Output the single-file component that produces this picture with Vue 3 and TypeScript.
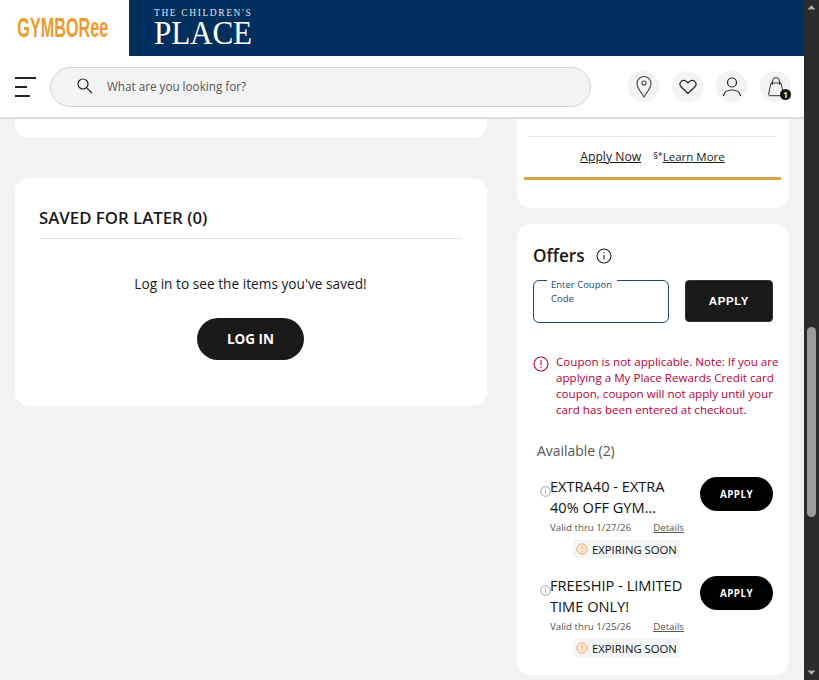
<script setup lang="ts">
interface Coupon { title: string; valid: string }
const coupons: Coupon[] = [
  { title: 'EXTRA40 - EXTRA 40% OFF GYM...', valid: 'Valid thru 1/27/26' },
  { title: 'FREESHIP - LIMITED TIME ONLY!', valid: 'Valid thru 1/25/26' },
]
</script>

<template>
  <div class="window">
    <div class="page">
      <header class="brands">
        <div class="gym"><span class="gym-text">GYMBORee</span></div>
        <div class="tcp">
          <span class="tcp-small">THE CHILDREN'S</span>
          <span class="tcp-big">PLACE</span>
        </div>
      </header>
      <nav class="nav">
        <div class="burger"><i class="b1"></i><i class="b2"></i><i class="b3"></i></div>
        <div class="search">
          <svg width="18" height="18" viewBox="0 0 18 18" fill="none" stroke="#222" stroke-width="1.2"><circle cx="7" cy="7" r="5"/><path d="M10.8 10.8 16 16"/></svg>
          <span>What are you looking for?</span>
        </div>
        <div class="icons">
          <div class="ic">
            <svg width="18" height="24" viewBox="0 0 18 24" fill="none" stroke="#444" stroke-width="1.1"><path d="M9 22C6 17 2 13 2 8.500a7 7 0 0 1 14 0C16 13 12 17 9 22Z"/><circle cx="9" cy="8" r="2"/></svg>
          </div>
          <div class="ic">
            <svg width="18" height="16" viewBox="0 0 18 16" fill="none" stroke="#222" stroke-width="1.2"><path d="M9 14.500 2.300 8A4 4 0 0 1 2 2.600a4.300 4.300 0 0 1 5.800.100L9 4l1.200-1.300a4.300 4.300 0 0 1 5.800-.1A4 4 0 0 1 15.700 8Z"/></svg>
          </div>
          <div class="ic">
            <svg width="20" height="22" viewBox="0 0 20 22" fill="none" stroke="#222" stroke-width="1.2"><circle cx="10" cy="6.500" r="4.500"/><path d="M1.500 20c.5-4 4-6 8.500-6s8 2 8.500 6"/></svg>
          </div>
          <div class="ic">
            <svg width="18" height="22" viewBox="0 0 18 22" fill="none" stroke="#333" stroke-width="1"><path d="M4 7 1.500 18.500c0 .800.500 1.200 1.200 1.200h12.600c.7 0 1.200-.4 1.200-1.200L14 7Z"/><path d="M5.500 9V5a3.500 3.500 0 0 1 7 0v4"/></svg>
            <span class="count">1</span>
          </div>
        </div>
      </nav>

      <main class="content">
        <section class="left">
          <div class="card stub-left"></div>
          <div class="card saved">
            <h2>SAVED FOR LATER (0)</h2>
            <p>Log in to see the items you've saved!</p>
            <button class="login">LOG IN</button>
          </div>
        </section>
        <aside class="right">
          <div class="card stub-right">
            <div class="links">
              <a>Apply Now</a>
              <span class="learn"><sup>§*</sup><a>Learn More</a></span>
            </div>
            <div class="gold"></div>
          </div>
          <div class="card offers">
            <div class="offers-head">
              <h3>Offers</h3>
              <svg width="16" height="16" viewBox="0 0 16 16" fill="none" stroke="#222" stroke-width="1.100"><circle cx="8" cy="8" r="7"/><path d="M8 7v4.500M8 4.300v1.200"/></svg>
            </div>
            <div class="coupon-row">
              <div class="field"><span>Enter Coupon<br>Code</span></div>
              <button class="apply-main">APPLY</button>
            </div>
            <div class="error">
              <svg width="16" height="16" viewBox="0 0 16 16" fill="none" stroke="#b5003c" stroke-width="1.100"><circle cx="8" cy="8" r="7"/><path d="M8 4v5M8 10.800v1.200"/></svg>
              <p>Coupon is not applicable. Note: If you are applying a My Place Rewards Credit card coupon, coupon will not apply until your card has been entered at checkout.</p>
            </div>
            <div class="avail">Available (2)</div>
            <div v-for="c in coupons" :key="c.title" class="coupon">
              <svg class="mini" width="11" height="11" viewBox="0 0 11 11" fill="none" stroke="#888" stroke-width=".8"><circle cx="5.500" cy="5.500" r="4.800"/><path d="M5.500 5v3M5.500 2.800v1"/></svg>
              <div class="coupon-body">
                <div class="coupon-top">
                  <div class="coupon-title">{{ c.title }}</div>
                  <button class="apply-pill">APPLY</button>
                </div>
                <div class="coupon-meta"><span>{{ c.valid }}</span><a>Details</a></div>
                <div class="expiring">
                  <svg width="12" height="12" viewBox="0 0 12 12" fill="#fbe6cf" stroke="#eca767" stroke-width=".9"><circle cx="6" cy="6" r="5.200"/><path d="M6 3v3.500M6 8v1"/></svg>
                  <span>EXPIRING SOON</span>
                </div>
              </div>
            </div>
          </div>
        </aside>
      </main>
    </div>
    <div class="scrollbar">
      <svg class="arrow" width="15" height="15" viewBox="0 0 15 15"><path d="M3.500 9.500 7.500 5l4 4.500Z" fill="#a8a8a8"/></svg>
      <div class="track"><div class="thumb"></div></div>
      <svg class="arrow" width="15" height="15" viewBox="0 0 15 15"><path d="M3.500 5.500 7.500 10l4-4.500Z" fill="#a8a8a8"/></svg>
    </div>
  </div>
</template>

<style>
html, body { margin: 0; height: 100%; overflow: hidden; }
</style>

<style scoped>
.window { display: flex; width: 819px; height: 680px; overflow: hidden; font-family: "Open Sans", "Noto Sans", sans-serif; color: #1a1a1a; }
.page { width: 804px; height: 680px; display: flex; flex-direction: column; background: #f2f2f2; overflow: hidden; }

.brands { height: 56px; flex: none; display: flex; background: #002e5d; }
.gym { width: 129px; background: #fff; display: flex; align-items: center; justify-content: center; }
.gym-text { font-family: "Liberation Sans", sans-serif; font-weight: 700; font-size: 27px; color: #ee9b2d; display: inline-block; transform: scaleX(.6); white-space: nowrap; margin-left: -3px; }
.tcp { margin-left: 25px; display: flex; flex-direction: column; justify-content: center; color: #fff; font-family: "Liberation Serif", serif; padding-bottom: 3px; }
.tcp-small { font-size: 9.500px; letter-spacing: 1.6px; line-height: 10px; margin-top: 2px; color: #dfe7ef; white-space: nowrap; }
.tcp-big { font-size: 34.500px; line-height: 29px; letter-spacing: -.2px; transform: scaleX(.905); transform-origin: left center; }

.nav { height: 61px; flex: none; background: #fff; border-bottom: 2px solid #ddd; display: flex; align-items: center; padding: 0 13px 0 15px; }
.burger { width: 21px; display: flex; flex-direction: column; gap: 7px; margin-right: 14px; }
.burger i { display: block; height: 2px; background: #222; }
.b1 { width: 21px; } .b2 { width: 12px; } .b3 { width: 15px; }
.search { width: 541px; height: 40px; box-sizing: border-box; border: 1px solid #d4d4d4; border-radius: 20px; background: #f3f3f3; display: flex; align-items: center; gap: 13px; padding: 0 0 1px 25px; font-size: 11.700px; color: #555; }
.icons { margin-left: auto; display: flex; gap: 13px; }
.ic { position: relative; width: 31px; height: 31px; border-radius: 50%; background: #f3f3f3; display: flex; align-items: center; justify-content: center; }
.count { position: absolute; right: 0; bottom: 2px; width: 11px; height: 11px; border-radius: 50%; background: #111; color: #fff; font-size: 8px; font-weight: 700; line-height: 11px; text-align: center; }

.content { flex: 1; display: flex; padding: 0 15px 0 15px; gap: 30px; min-height: 0; }
.left { width: 472px; flex: none; }
.right { width: 272px; flex: none; }
.card { background: #fff; border-radius: 14px; }
.stub-left { height: 19px; border-radius: 0 0 14px 14px; margin-bottom: 40px; }
.saved { height: 228px; box-sizing: border-box; padding: 30px 25px 0 24px; display: flex; flex-direction: column; align-items: center; }
.saved h2 { align-self: stretch; margin: 0; font-size: 16.800px; font-weight: 600; line-height: 20px; padding-bottom: 10px; border-bottom: 1px solid #e2e2e2; }
.saved p { margin: 35px 0 0; font-size: 13.700px; line-height: 19px; }
.login { margin-top: 25px; width: 107px; height: 42px; border: 0; border-radius: 21px; background: #1a1a1a; color: #fff; font: 700 13.500px "Open Sans", sans-serif; padding: 0; }

.stub-right { height: 89px; border-radius: 0 0 14px 14px; margin-bottom: 16px; padding: 17px 8px 0 7px; box-sizing: border-box; }
.links { margin: 0 4px; border-top: 1px solid #e8e8e8; padding-top: 11px; display: flex; justify-content: center; gap: 12px; font-size: 12.200px; line-height: 18px; }
.links a { text-decoration: underline; }
.learn { font-size: 11.500px; }
.learn sup { font-size: 9px; line-height: 0; vertical-align: 2px; }
.gold { height: 3px; background: #d9a441; margin-top: 11px; }

.offers { height: 451px; box-sizing: border-box; padding: 21px 16px 0 16px; }
.offers-head { display: flex; align-items: center; gap: 11px; height: 21px; }
.offers-head h3 { margin: 0; font-size: 17.200px; font-weight: 600; line-height: 21px; }
.coupon-row { display: flex; justify-content: space-between; margin-top: 14px; }
.field { position: relative; width: 136px; height: 43px; box-sizing: border-box; border: 1px solid #234a6d; border-radius: 6px; }
.field span { position: absolute; left: 13px; top: -3px; background: #fff; padding: 0 5px 0 4px; font-size: 9.500px; line-height: 14px; color: #234a6d; font-weight: 500; }
.apply-main { width: 88px; height: 42px; border: 1px solid #333; border-radius: 4px; background: #1a1a1a; color: #fff; font: 700 11.500px "Liberation Sans", sans-serif; letter-spacing: .6px; }
.error { display: flex; gap: 7px; margin: 31px -8px 0 0; }
.error svg { flex: none; margin-top: 2px; }
.error p { margin: 0; flex: none; font-size: 11.600px; line-height: 16px; color: #b5003c; width: 226px; }
.avail { margin: 24px 0 0 4px; font-size: 13.900px; line-height: 18px; color: #555; }
.coupon { position: relative; margin: 17px 0 0 17px; }
.coupon + .coupon { margin-top: 18px; }
.mini { position: absolute; left: -10px; top: 9px; }
.coupon-top { display: flex; justify-content: space-between; }
.coupon-title { width: 138px; margin-top: -1px; font-size: 14.600px; line-height: 21px; color: #111; }
.apply-pill { width: 73px; height: 34px; margin-top: 0; border: 0; border-radius: 17px; background: #000; color: #fff; font: 700 9.800px "Open Sans", sans-serif; letter-spacing: .5px; flex: none; }
.coupon-meta { display: flex; width: 134px; justify-content: space-between; margin-top: 3px; font-size: 9.700px; line-height: 14px; color: #555; }
.coupon-meta a { text-decoration: underline; }
.expiring { display: flex; align-items: center; gap: 4px; width: max-content; margin: 5px 0 0 23px; padding: 0 3px 0 3px; height: 18px; background: #f3f5f7; font-size: 11.300px; font-weight: 500; color: #111; }

.scrollbar { width: 15px; height: 680px; background: #2b2b2b; display: flex; flex-direction: column; }
.arrow { flex: none; }
.track { flex: 1; padding-top: 312px; }
.thumb { width: 9px; height: 190px; margin-left: 3px; border-radius: 5px; background: #9b9b9b; }
</style>
